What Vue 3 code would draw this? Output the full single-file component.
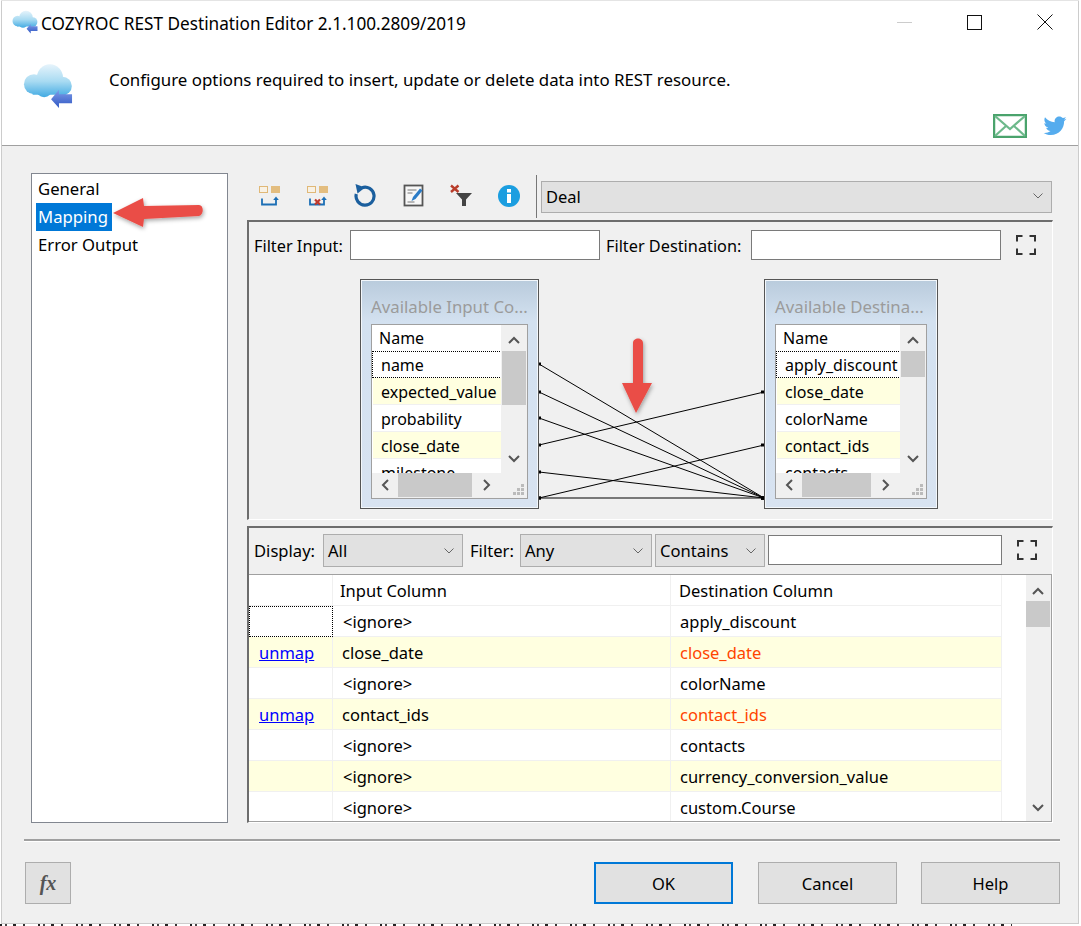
<script setup>
const inputRows = [
  { name: 'name', focus: true },
  { name: 'expected_value', mapped: true },
  { name: 'probability' },
  { name: 'close_date', mapped: true },
  { name: 'milestone' }
]

const destRows = [
  { name: 'apply_discount', focus: true },
  { name: 'close_date', mapped: true },
  { name: 'colorName' },
  { name: 'contact_ids', mapped: true },
  { name: 'contacts' }
]

const mappingRows = [
  { input: '<ignore>', dest: 'apply_discount', focus: true },
  { input: 'close_date', dest: 'close_date', mapped: true, unmap: true },
  { input: '<ignore>', dest: 'colorName' },
  { input: 'contact_ids', dest: 'contact_ids', mapped: true, unmap: true },
  { input: '<ignore>', dest: 'contacts' },
  { input: '<ignore>', dest: 'currency_conversion_value', shaded: true },
  { input: '<ignore>', dest: 'custom.Course' }
]

// left pin y, right pin y, in page pixels (the svg viewBox starts at 247,270)
const links = [
  [364, 498], [392, 498], [418, 498], [445, 392], [472, 498], [498, 445], [498, 498]
]
</script>

<template>
  <div class="page">
    <div class="backdrop"></div>

    <div class="window">
      <div class="titlebar">
        <svg class="title-icon" viewBox="0 0 26 26" width="26" height="26">
          <use href="#cloud" />
        </svg>
        <span class="title-text">COZYROC REST Destination Editor 2.1.100.2809/2019</span>
        <div class="window-buttons">
          <span class="minimize"></span>
          <span class="maximize"></span>
          <svg class="close" viewBox="0 0 16 16" width="16" height="16">
            <path d="M.5.5l15 15M15.500.5l-15 15" stroke="#111" fill="none" />
          </svg>
        </div>
      </div>

      <div class="header">
        <svg class="header-icon" viewBox="0 0 26 26" width="50" height="50">
          <defs>
            <linearGradient id="cloudFill" gradientUnits="userSpaceOnUse" x1="0" y1="1" x2="0" y2="18">
              <stop offset="0" stop-color="#e4f3fb" />
              <stop offset="0.5" stop-color="#a9dbf2" />
              <stop offset="1" stop-color="#3fa9e2" />
            </linearGradient>
            <linearGradient id="arrowFill" x1="0" y1="0" x2="0" y2="1">
              <stop offset="0" stop-color="#7f9de8" />
              <stop offset="1" stop-color="#2f57c4" />
            </linearGradient>
            <g id="cloud">
              <g fill="url(#cloudFill)">
                <circle cx="5.700" cy="11" r="5.200" />
                <circle cx="14" cy="7.500" r="6.800" />
                <circle cx="20.600" cy="12" r="4.800" />
                <rect x="5" y="10" width="15" height="6.500" />
                <circle cx="11" cy="13.500" r="4.300" />
              </g>
              <path d="M14.600 18.800l4.100-4.900v2.300h6.800v4.700h-6.800v2.500z" fill="url(#arrowFill)" />
            </g>
          </defs>
          <use href="#cloud" />
        </svg>
        <p class="header-text">Configure options required to insert, update or delete data into REST resource.</p>
        <div class="header-links">
          <svg viewBox="0 0 34 24" width="34" height="24">
            <rect x="1" y="1" width="32" height="22" fill="#fff" stroke="#4aa36c" stroke-width="2.500" />
            <path d="M2 2l15 13L32 2M2 22l11-10M32 22L21 12" fill="none" stroke="#6db98b" stroke-width="2.200" />
          </svg>
          <svg viewBox="0 0 24 20" width="24" height="20">
            <path d="M23.500 2.800c-.9.400-1.800.6-2.700.8 1-.6 1.700-1.500 2-2.600-.9.500-1.900.9-3 1.100C18.900 1 17.700.4 16.300.4c-2.600 0-4.700 2.100-4.700 4.700 0 .4 0 .7.100 1.100C7.800 6 4.300 4.100 2 1.300c-.4.700-.6 1.500-.6 2.400 0 1.600.8 3 2.100 3.900-.8 0-1.500-.2-2.100-.6v.1c0 2.300 1.600 4.200 3.800 4.600-.4.100-.8.200-1.200.2-.3 0-.6 0-.9-.1.600 1.900 2.300 3.200 4.400 3.300-1.600 1.300-3.600 2-5.800 2-.4 0-.8 0-1.100-.1 2.100 1.300 4.500 2.100 7.200 2.100 8.600 0 13.300-7.100 13.300-13.300v-.6c.9-.7 1.700-1.500 2.400-2.400z" fill="#55acee" />
          </svg>
        </div>
      </div>

      <div class="body">
        <div class="content">
          <ul class="nav">
            <li>General</li>
            <li class="nav-active"><span>Mapping</span></li>
            <li>Error Output</li>
          </ul>

          <div class="main">
            <div class="toolbar">
              <div class="tools">
                <svg viewBox="0 0 24 24" width="24" height="24">
                  <rect x="2.500" y="3.500" width="8" height="6" fill="#f8f1e4" stroke="#e0b877" />
                  <rect x="14" y="3" width="9" height="7" fill="#e3bd7f" />
                  <path d="M5 15.500V21.500H19V17" fill="none" stroke="#1c6fb5" stroke-width="1.800" />
                  <path d="M19 13.500l-2.800 3.500h5.600z" fill="#1c6fb5" />
                </svg>
                <svg viewBox="0 0 24 24" width="24" height="24">
                  <rect x="2.500" y="3.500" width="8" height="6" fill="#f8f1e4" stroke="#e0b877" />
                  <rect x="14" y="3" width="9" height="7" fill="#e3bd7f" />
                  <path d="M5 15.500V21.500H19V17" fill="none" stroke="#1c6fb5" stroke-width="1.800" />
                  <path d="M19 13.500l-2.800 3.500h5.600z" fill="#1c6fb5" />
                  <path d="M10 16.500l5 5m0-5l-5 5" stroke="#c0392b" stroke-width="2.200" />
                </svg>
                <svg viewBox="0 0 24 24" width="24" height="24">
                  <path d="M9 4.700A9 9 0 1 1 3.300 11" fill="none" stroke="#1b5f9e" stroke-width="3.200" />
                  <path d="M2.500 1l9.500 3.500-7.500 6z" fill="#1b5f9e" />
                </svg>
                <svg viewBox="0 0 24 24" width="24" height="24">
                  <rect x="3.500" y="2.500" width="18" height="20" fill="#f7f7f7" stroke="#555" stroke-width="1.800" />
                  <path d="M6.500 7h9M6.500 10h5M6.500 19h7" stroke="#777" />
                  <path d="M10.500 18l1.500-4 7-8.500 2.500 2-7 8.500z" fill="#2b7cc7" />
                </svg>
                <svg viewBox="0 0 24 24" width="24" height="24">
                  <path d="M2 2.500l7.500 6.500m0-6.500L2 9" stroke="#b83c2a" stroke-width="2.400" />
                  <path d="M7 10H23l-6 6.500V23h-4v-6.500z" fill="#444" />
                </svg>
                <svg viewBox="0 0 24 24" width="24" height="24">
                  <circle cx="12" cy="13" r="11" fill="#1b9ee0" />
                  <path d="M10 11h4v9h-4zM10 6h4v3.500h-4z" fill="#fff" />
                </svg>
              </div>
              <span class="tool-sep"></span>
              <div class="select select-deal">
                <span>Deal</span>
                <svg class="chevron" viewBox="0 0 10 6" width="10" height="6"><path d="M.5.500L5 5 9.500.500" fill="none" stroke="#666" /></svg>
              </div>
            </div>

            <section class="panel panel-diagram">
              <div class="filter-row">
                <label class="label-input">Filter Input:</label>
                <span class="input input-filter"></span>
                <label class="label-dest">Filter Destination:</label>
                <span class="input input-filter"></span>
                <svg class="expand" viewBox="0 0 20 20" width="20" height="20">
                  <path d="M1 6.500V1h5.500M13.500 1H19v5.500M19 13.500V19h-5.500M6.500 19H1v-5.500" fill="none" stroke="#333" stroke-width="2" />
                </svg>
              </div>

              <div class="canvas">
                <svg class="links" width="806" height="250" viewBox="247 270 806 250">
                  <g v-for="(l, i) in links" :key="i">
                    <line x1="539" :y1="l[0]" x2="764" :y2="l[1]" stroke="#000" />
                    <rect x="538" :y="l[0] - 1.500" width="3" height="3" fill="#000" />
                    <rect x="761" :y="l[1] - 1.500" width="3" height="3" fill="#000" />
                  </g>
                </svg>

                <div class="node node-input">
                  <div class="node-title">Available Input Co...</div>
                  <div class="list">
                    <div class="list-rows">
                      <div class="list-head">Name</div>
                      <div
                        v-for="row in inputRows"
                        :key="row.name"
                        class="list-row"
                        :class="{ mapped: row.mapped, focus: row.focus }"
                      >{{ row.name }}</div>
                    </div>
                    <div class="vscroll">
                      <svg viewBox="0 0 12 8" width="12" height="8"><path d="M1 7l5-5 5 5" fill="none" stroke="#555" stroke-width="2" /></svg>
                      <span class="vthumb thumb-input"></span>
                      <svg class="v-down" viewBox="0 0 12 8" width="12" height="8"><path d="M1 1l5 5 5-5" fill="none" stroke="#555" stroke-width="2" /></svg>
                    </div>
                    <div class="hscroll">
                      <svg viewBox="0 0 8 12" width="8" height="12"><path d="M7 1L2 6l5 5" fill="none" stroke="#555" stroke-width="2" /></svg>
                      <span class="hthumb hthumb-input"></span>
                      <svg viewBox="0 0 8 12" width="8" height="12"><path d="M1 1l5 5-5 5" fill="none" stroke="#555" stroke-width="2" /></svg>
                    </div>
                    <svg class="grip" viewBox="0 0 11 11" width="11" height="11"><path d="M8 0h3v3H8zM4 4h3v3H4zM8 4h3v3H8zM0 8h3v3H0zM4 8h3v3H4zM8 8h3v3H8z" fill="#bbb" /></svg>
                  </div>
                </div>

                <div class="node node-dest">
                  <div class="node-title">Available Destina...</div>
                  <div class="list">
                    <div class="list-rows">
                      <div class="list-head">Name</div>
                      <div
                        v-for="row in destRows"
                        :key="row.name"
                        class="list-row"
                        :class="{ mapped: row.mapped, focus: row.focus }"
                      >{{ row.name }}</div>
                    </div>
                    <div class="vscroll">
                      <svg viewBox="0 0 12 8" width="12" height="8"><path d="M1 7l5-5 5 5" fill="none" stroke="#555" stroke-width="2" /></svg>
                      <span class="vthumb thumb-dest"></span>
                      <svg class="v-down" viewBox="0 0 12 8" width="12" height="8"><path d="M1 1l5 5 5-5" fill="none" stroke="#555" stroke-width="2" /></svg>
                    </div>
                    <div class="hscroll">
                      <svg viewBox="0 0 8 12" width="8" height="12"><path d="M7 1L2 6l5 5" fill="none" stroke="#555" stroke-width="2" /></svg>
                      <span class="hthumb hthumb-dest"></span>
                      <svg viewBox="0 0 8 12" width="8" height="12"><path d="M1 1l5 5-5 5" fill="none" stroke="#555" stroke-width="2" /></svg>
                    </div>
                    <svg class="grip" viewBox="0 0 11 11" width="11" height="11"><path d="M8 0h3v3H8zM4 4h3v3H4zM8 4h3v3H8zM0 8h3v3H0zM4 8h3v3H4zM8 8h3v3H8z" fill="#bbb" /></svg>
                  </div>
                </div>
              </div>
            </section>

            <section class="panel panel-table">
              <div class="filter-row filter-row-table">
                <label class="label-display">Display:</label>
                <div class="select select-display"><span>All</span><svg class="chevron" viewBox="0 0 10 6" width="10" height="6"><path d="M.5.500L5 5 9.500.500" fill="none" stroke="#666" /></svg></div>
                <label class="label-filter">Filter:</label>
                <div class="select select-any"><span>Any</span><svg class="chevron" viewBox="0 0 10 6" width="10" height="6"><path d="M.5.500L5 5 9.500.500" fill="none" stroke="#666" /></svg></div>
                <div class="select select-contains"><span>Contains</span><svg class="chevron" viewBox="0 0 10 6" width="10" height="6"><path d="M.5.500L5 5 9.500.500" fill="none" stroke="#666" /></svg></div>
                <span class="input input-search"></span>
                <svg class="expand" viewBox="0 0 20 20" width="20" height="20">
                  <path d="M1 6.500V1h5.500M13.500 1H19v5.500M19 13.500V19h-5.500M6.500 19H1v-5.500" fill="none" stroke="#333" stroke-width="2" />
                </svg>
              </div>

              <div class="grid-wrap">
                <div class="grid">
                  <div class="grid-head">
                    <div class="cell cell-action"></div>
                    <div class="cell cell-input head-input">Input Column</div>
                    <div class="cell cell-dest">Destination Column</div>
                  </div>
                  <div
                    v-for="(row, i) in mappingRows"
                    :key="i"
                    class="grid-row"
                    :class="{ mapped: row.mapped || row.shaded }"
                  >
                    <div class="cell cell-action" :class="{ focus: row.focus }">
                      <a v-if="row.unmap" class="unmap">unmap</a>
                    </div>
                    <div class="cell cell-input" :class="{ ignore: row.input === '<ignore>' }">{{ row.input }}</div>
                    <div class="cell cell-dest" :class="{ hot: row.mapped }">{{ row.dest }}</div>
                  </div>
                </div>
                <div class="grid-scroll">
                  <svg viewBox="0 0 12 8" width="12" height="8"><path d="M1 7l5-5 5 5" fill="none" stroke="#555" stroke-width="2" /></svg>
                  <span class="grid-thumb"></span>
                  <svg class="v-down" viewBox="0 0 12 8" width="12" height="8"><path d="M1 1l5 5 5-5" fill="none" stroke="#555" stroke-width="2" /></svg>
                </div>
              </div>
            </section>
          </div>
        </div>

        <div class="footer">
          <button class="btn btn-fx"><i>fx</i></button>
          <span class="footer-gap"></span>
          <button class="btn btn-ok">OK</button>
          <button class="btn">Cancel</button>
          <button class="btn">Help</button>
        </div>
      </div>

      <!-- annotation arrows pasted over the dialog -->
      <svg class="annotations" width="1081" height="926" viewBox="0 0 1081 926">
        <defs>
          <filter id="arrowShadow" x="-30%" y="-30%" width="160%" height="160%">
            <feDropShadow dx="1" dy="2" stdDeviation="2" flood-color="#000" flood-opacity="0.35" />
          </filter>
        </defs>
        <path d="M113 213l30-15 1 8 55-1c5 0 5 10 0 11l-55 3-1 8z" fill="#ea4e46" filter="url(#arrowShadow)" />
        <path d="M633 343c0-6 10-6 10 0l0 40h9l-16 30-14-30h11z" fill="#ea4e46" filter="url(#arrowShadow)" />
      </svg>
    </div>
  </div>
</template>

<style>
html, body {
  margin: 0;
  background: #fff;
}
</style>

<style scoped>
.page {
  position: relative;
  width: 1081px;
  height: 926px;
  overflow: hidden;
  font-family: "Noto Sans", "Open Sans", sans-serif;
  font-size: 16.5px;
  color: #000;
  box-sizing: border-box;
  padding: 1px 2px 0 1px;
  background: #fff;
}

.page *, .page *::before {
  box-sizing: border-box;
}

/* the page behind the dialog only shows as the cut-off feet of its letters */
.backdrop {
  position: absolute;
  left: 0;
  width: 1012px;
  bottom: 0;
  height: 2px;
  background:
    repeating-linear-gradient(90deg, #222 0 2px, transparent 2px 5px, #444 5px 7px, transparent 7px 13px, #222 13px 16px, transparent 16px 23px, #333 23px 25px, transparent 25px 38px);
}

.window {
  position: relative;
  width: 1078px;
  height: 923px;
  background: #f0f0f0;
  border-left: 1px solid #ccc;
  border-right: 1px solid #ccc;
  border-bottom: 1px solid #ccc;
  box-shadow: 0 -1px 0 #e4e4e4;
}

.titlebar {
  height: 44px;
  background: #fff;
  display: flex;
  align-items: center;
  padding-left: 10px;
}

.title-icon {
  flex: none;
  margin-right: 3px;
}

.title-text {
  flex: 1;
  font-size: 17.2px;
  white-space: nowrap;
}

.window-buttons {
  display: flex;
  align-items: center;
  gap: 55px;
  padding-right: 25px;
  margin-top: -2px;
}

.minimize {
  width: 15px;
  height: 1px;
  background: #ccc;
}

.maximize {
  width: 15px;
  height: 15px;
  border: 1px solid #111;
}

.header {
  height: 101px;
  background: #fff;
  border-bottom: 1px solid #a0a0a0;
  display: flex;
  padding: 18px 11px 0 21px;
  position: relative;
}

.header-icon {
  flex: none;
  margin-right: 36px;
}

.header-text {
  margin: 5px 0 0;
  font-size: 16.86px;
  line-height: 24px;
  white-space: nowrap;
}

.header-links {
  position: absolute;
  right: 11px;
  bottom: 7px;
  display: flex;
  align-items: center;
  gap: 16px;
}

.body {
  height: 777px;
  padding: 27px 18px 0 29px;
}

.content {
  display: flex;
  height: 650px;
  gap: 19px;
}

.nav {
  list-style: none;
  margin: 0;
  padding: 1px 0 0 4px;
  width: 197px;
  background: #fff;
  border: 1px solid #828790;
  font-size: 16.7px;
}

.nav li {
  height: 28px;
  line-height: 28px;
  padding-left: 2px;
}

.nav-active span {
  display: inline-block;
  margin-left: -2px;
  padding: 0 2px;
  width: 76px;
  background: #0078d7;
  color: #fff;
}

.main {
  width: 806px;
  display: flex;
  flex-direction: column;
}

.toolbar {
  height: 47px;
  display: flex;
  align-items: flex-start;
}

.tools {
  width: 289px;
  padding: 10px 0 0 10px;
  display: flex;
  gap: 24px;
}

.tool-sep {
  width: 1px;
  height: 43px;
  margin-top: 2px;
  background: #777;
}

.select {
  position: relative;
  display: flex;
  align-items: center;
  justify-content: space-between;
  background: #e1e1e1;
  border: 1px solid #adadad;
  padding: 0 8px 0 4px;
  white-space: nowrap;
}

.select-deal {
  margin: 8px 0 0 4px;
  width: 511px;
  height: 32px;
  padding-bottom: 2px;
}

.panel {
  border-top: 2px solid #6d6d6d;
  border-left: 2px solid #6d6d6d;
  border-right: 1px solid #fff;
  border-bottom: 1px solid #fff;
}

.panel-diagram {
  height: 300px;
}

.panel-table {
  margin-top: 6px;
  height: 297px;
}

.filter-row {
  height: 40px;
  padding: 8px 0 0 5px;
  display: flex;
  align-items: flex-start;
  font-size: 16.3px;
}

.filter-row label {
  line-height: 32px;
  white-space: nowrap;
}

.label-input {
  width: 96px;
}

.label-dest {
  width: 145px;
  margin-left: 6px;
}

.input {
  display: block;
  background: #fff;
  border: 1px solid #7a7a7a;
  height: 30px;
}

.input-filter {
  width: 250px;
}

.expand {
  margin: 5px 0 0 15px;
}

.canvas {
  position: relative;
  height: 257px;
}

.links {
  position: absolute;
  left: -2px;
  top: 8px;
}

.node {
  position: absolute;
  top: 17px;
  height: 230px;
  background: linear-gradient(#b9cbdc, #d3e1f0 18%, #d8e3f1);
  border: 1px solid #555;
  outline: 1px solid #f3f7fb;
  outline-offset: -2px;
  padding: 44px 10px 0;
  font-size: 16px;
}

.node-input {
  left: 111px;
  width: 179px;
}

.node-dest {
  left: 515px;
  width: 174px;
}

.node-title {
  position: absolute;
  left: 10px;
  top: 15px;
  color: #9b9b9b;
  font-size: 16.8px;
  white-space: nowrap;
}

.list {
  position: relative;
  height: 175px;
  background: #f0f0f0;
  border: 1px solid #a0a0a0;
  overflow: hidden;
}

.list-rows {
  position: absolute;
  left: 0;
  top: 0;
  right: 26px;
  bottom: 25px;
  background: #fff;
  overflow: hidden;
}

.list-head {
  height: 26px;
  line-height: 26px;
  padding-left: 7px;
}

.list-row {
  height: 27px;
  line-height: 26px;
  padding: 1px 0 0 8px;
  margin-left: 1px;
  border-bottom: 1px solid #f0f0f0;
  white-space: nowrap;
  overflow: hidden;
}

.list-row.mapped {
  background: #ffffe0;
}

.list-row.focus {
  padding-top: 0;
  border-top: 1px dotted #000;
  border-bottom: 1px dotted #000;
  border-left: 1px dotted #000;
  margin-left: 0;
  margin-right: 1px;
}

.vscroll {
  position: absolute;
  top: 0;
  right: 1px;
  bottom: 25px;
  width: 24px;
}

.vscroll svg {
  position: absolute;
  left: 6px;
  top: 11px;
}

.vscroll svg.v-down {
  top: auto;
  bottom: 10px;
}

.vthumb {
  position: absolute;
  left: 0;
  top: 26px;
  width: 24px;
  background: #c9c9c9;
}

.thumb-input {
  height: 54px;
}

.thumb-dest {
  height: 26px;
}

.hscroll {
  position: absolute;
  left: 0;
  right: 26px;
  bottom: 1px;
  height: 24px;
}

.hscroll svg {
  position: absolute;
  top: 6px;
  left: 9px;
}

.hscroll svg:last-child {
  left: auto;
  right: 10px;
}

.hthumb {
  position: absolute;
  top: 0;
  height: 24px;
  background: #c9c9c9;
}

.hthumb-input {
  left: 26px;
  width: 74px;
}

.hthumb-dest {
  left: 26px;
  width: 69px;
}

.grip {
  position: absolute;
  right: 3px;
  bottom: 3px;
}

.filter-row-table {
  height: 46px;
  padding: 6px 0 0 5px;
  font-size: 16.6px;
}

.filter-row-table label {
  line-height: 33px;
}

.label-display {
  width: 69px;
}

.select-display {
  width: 140px;
  height: 33px;
}

.label-filter {
  width: 50px;
  margin-left: 7px;
}

.select-any {
  width: 132px;
  height: 33px;
}

.select-contains {
  width: 110px;
  height: 33px;
  margin-left: 3px;
}

.input-search {
  width: 234px;
  margin: 1px 0 0 3px;
}

.filter-row-table .expand {
  margin-top: 6px;
  margin-left: 15px;
}

.grid-wrap {
  position: relative;
  height: 248px;
  border: 1px solid #a0a0a0;
  border-left: 0;
  background: #f0f0f0;
  display: flex;
  overflow: hidden;
}

.grid {
  width: 777px;
  background: #fff;
  flex: none;
}

.grid-head, .grid-row {
  display: flex;
  width: 753px;
  height: 31px;
}

.cell {
  line-height: 32px;
  border-bottom: 1px solid #f0f0f0;
  border-right: 1px solid #f0f0f0;
  padding-left: 9px;
  white-space: nowrap;
}

.cell-action {
  width: 84px;
  padding-left: 10px;
}

.cell-input {
  width: 338px;
}

.cell-dest {
  width: 331px;
}

.head-input {
  padding-left: 7px;
}

.grid-head .cell-dest {
  padding-left: 8px;
}

.cell.ignore {
  padding-left: 10px;
}

.grid-row.mapped {
  background: #ffffe0;
}

.cell-action.focus {
  border: 1px dotted #000;
}

.cell.hot {
  color: #ff4500;
}

.unmap {
  color: #0000ff;
  text-decoration: underline;
}

.grid-scroll {
  position: relative;
  width: 24px;
  flex: none;
}

.grid-scroll svg {
  position: absolute;
  left: 6px;
  top: 12px;
}

.grid-scroll svg.v-down {
  top: auto;
  bottom: 9px;
}

.grid-thumb {
  position: absolute;
  top: 26px;
  left: 0;
  width: 24px;
  height: 26px;
  background: #c9c9c9;
}

.footer {
  margin: 16px 0 0 -7px;
  padding: 21px 0 0 1px;
  border-top: 2px solid #a0a0a0;
  box-shadow: inset 0 1px 0 #fff;
  display: flex;
  gap: 24px;
}

.footer-gap {
  flex: 1;
}

.btn {
  width: 139px;
  height: 42px;
  background: #e1e1e1;
  border: 1px solid #adadad;
  font: inherit;
  color: #000;
  padding: 0;
}

.btn-ok {
  border: 2px solid #0078d7;
  margin: 0 1px 0 -1px;
}

.btn-fx {
  width: 46px;
  color: #555;
  font-family: "Liberation Serif", serif;
  font-weight: bold;
  font-size: 20px;
}

.annotations {
  position: absolute;
  left: -2px;
  top: -1px;
  pointer-events: none;
}
</style>
